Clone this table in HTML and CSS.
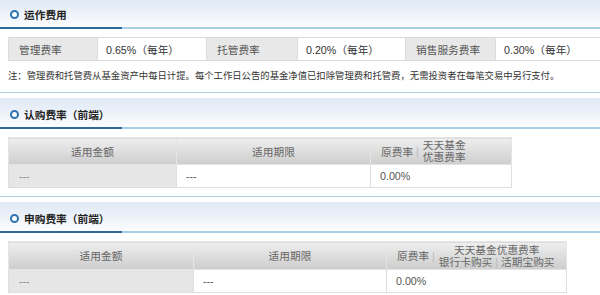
FILE: index.html
```html
<!DOCTYPE html>
<html>
<head>
<meta charset="utf-8">
<link rel="stylesheet" href="styles.css">
</head>
<body>
<div class="section first">
  <div class="sec-head"><span class="dot"></span><span class="sec-title">运作费用</span></div>
  <div class="sec-body">
    <table class="fee">
      <tr>
        <td class="lab c1">管理费率</td><td class="val c2">0.65%（每年）</td>
        <td class="lab c3">托管费率</td><td class="val c4">0.20%（每年）</td>
        <td class="lab c5">销售服务费率</td><td class="val c6">0.30%（每年）</td>
      </tr>
    </table>
    <p class="note">注：管理费和托管费从基金资产中每日计提。每个工作日公告的基金净值已扣除管理费和托管费，无需投资者在每笔交易中另行支付。</p>
  </div>
</div>

<div class="section">
  <div class="sec-head"><span class="dot"></span><span class="sec-title">认购费率（前端）</span></div>
  <div class="sec-body">
    <table class="rate rate1">
      <tr class="hrow">
        <th class="t1a">适用金额</th><th class="t1b">适用期限</th>
        <th class="t1c"><div class="rh"><span>原费率</span><span class="sep">|</span><span class="rh-sub left"><span>天天基金</span><span>优惠费率</span></span></div></th>
      </tr>
      <tr class="drow">
        <td class="gray">---</td><td>---</td><td>0.00%</td>
      </tr>
    </table>
  </div>
</div>

<div class="section">
  <div class="sec-head"><span class="dot"></span><span class="sec-title">申购费率（前端）</span></div>
  <div class="sec-body">
    <table class="rate rate2">
      <tr class="hrow tall">
        <th class="t2a">适用金额</th><th class="t2b">适用期限</th>
        <th class="t2c"><div class="rh"><span>原费率</span><span class="sep">|</span><span class="rh-sub"><span>天天基金优惠费率</span><span>银行卡购买<span class="sep2">|</span>活期宝购买</span></span></div></th>
      </tr>
      <tr class="drow">
        <td class="gray">---</td><td>---</td><td>0.00%</td>
      </tr>
    </table>
  </div>
</div>
</body>
</html>
```

FILE: styles.css
```css
* { box-sizing: border-box; }
html, body {
  margin: 0;
  padding: 0;
  background: #fff;
}
body {
  width: 600px;
  overflow: hidden;
  font-family: "Liberation Sans", "Noto Sans CJK SC", sans-serif;
  color: #333;
}
.section {
  border-bottom: 1px solid #a9cfe6;
  margin-top: 5px;
}
.section.first {
  margin-top: -2px;
}
.sec-head {
  position: relative;
  height: 31px;
  display: flex;
  align-items: center;
  padding: 3px 0 0 10px;
  background: linear-gradient(#dfe8f5, #fbfcfe);
  border-bottom: 2px solid #a9cfe6;
}
.sec-head::after {
  content: "";
  position: absolute;
  left: 0;
  bottom: -2px;
  width: 122px;
  height: 2px;
  background: #2d6a9c;
}
.dot {
  width: 9px;
  height: 9px;
  border: 2px solid #2f74b5;
  border-radius: 50%;
  background: #fff;
  margin-right: 5px;
}
.sec-title {
  font-size: 10.7px;
  font-weight: bold;
  color: #222;
}
.sec-body {
  padding: 8px 0 8px 8px;
}
table {
  border-collapse: collapse;
  table-layout: fixed;
}
.fee {
  width: 592px;
  font-size: 10.7px;
}
.fee td {
  height: 23px;
  border: 1px solid #dcdcdc;
  padding: 0 0 0 8px;
  white-space: nowrap;
}
.fee .lab {
  background: #e8e8e8;
  color: #555;
  padding-left: 10px;
}
.fee .val { color: #333; }
.c1 { width: 89px; }
.c2 { width: 109px; }
.c3 { width: 91px; }
.c4 { width: 108px; }
.c5 { width: 90px; }
.c6 { width: 105px; }
.note {
  margin: 9px 0 2px;
  font-size: 9.35px;
  line-height: 12px;
  color: #333;
  white-space: nowrap;
}
.rate {
  font-size: 10.7px;
  color: #666;
}
.rate1 { width: 503px; }
.rate2 { width: 558px; }
.t1a { width: 168px; }
.t1b { width: 194px; }
.t1c { width: 141px; }
.t2a { width: 185px; }
.t2b { width: 193px; }
.t2c { width: 180px; }
.rate th {
  height: 27px;
  font-weight: normal;
  color: #666;
  background: linear-gradient(#eeeeee, #cdcdcd);
  border: 1px solid #e4e4e4;
  text-align: center;
  padding: 0;
}
.rate .tall th { height: 28px; }
.rate td {
  height: 23px;
  border: 1px solid #dedede;
  padding: 0 0 0 9px;
  color: #555;
  background: #fff;
}
.rate td.gray {
  background: #e6e6e6;
  padding-left: 10px;
  color: #888;
}
.rh {
  display: flex;
  align-items: center;
  padding-left: 10px;
  text-align: left;
}
.sep {
  color: #bbb;
  margin: 0 4px 0 3px;
}
.rh-sub {
  display: flex;
  flex-direction: column;
  align-items: center;
  line-height: 12px;
}
.rh-sub.left { align-items: flex-start; }
.sep2 {
  color: #bbb;
  margin: 0 3px;
}
```
